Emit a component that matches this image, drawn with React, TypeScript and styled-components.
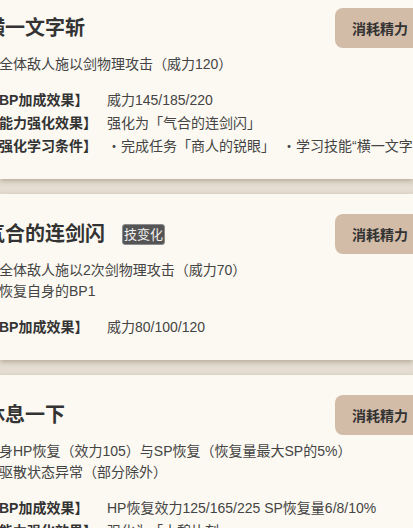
import { createGlobalStyle, styled } from "styled-components";

type Effect = { label: string; value: string };

type Skill = {
  name: string;
  badge?: string;
  desc: string[];
  effects: Effect[];
};

const skills: Skill[] = [
  {
    name: "横一文字斩",
    desc: ["对全体敌人施以剑物理攻击（威力120）"],
    effects: [
      { label: "【BP加成效果】", value: "威力145/185/220" },
      { label: "【能力强化效果】", value: "强化为「气合的连剑闪」" },
      {
        label: "【强化学习条件】",
        value: "・完成任务「商人的锐眼」　・学习技能“横一文字斩”",
      },
    ],
  },
  {
    name: "气合的连剑闪",
    badge: "技变化",
    desc: ["对全体敌人施以2次剑物理攻击（威力70）", "并恢复自身的BP1"],
    effects: [{ label: "【BP加成效果】", value: "威力80/100/120" }],
  },
  {
    name: "休息一下",
    desc: [
      "自身HP恢复（效力105）与SP恢复（恢复量最大SP的5%）",
      "并驱散状态异常（部分除外）",
    ],
    effects: [
      { label: "【BP加成效果】", value: "HP恢复效力125/165/225 SP恢复量6/8/10%" },
      { label: "【能力强化效果】", value: "强化为「小憩片刻」" },
    ],
  },
];

function SkillCard({ skill }: { skill: Skill }) {
  return (
    <Card>
      <Inner>
        <Header>
          <TitleRow>
            <Title>{skill.name}</Title>
            {skill.badge && <Badge>{skill.badge}</Badge>}
          </TitleRow>
          <CostButton>消耗精力</CostButton>
        </Header>
        <Desc>
          {skill.desc.map((line) => (
            <div key={line}>{line}</div>
          ))}
        </Desc>
        <Effects>
          {skill.effects.map((e) => (
            <EffectRow key={e.label}>
              <EffectLabel>{e.label}</EffectLabel>
              <EffectValue>{e.value}</EffectValue>
            </EffectRow>
          ))}
        </Effects>
      </Inner>
    </Card>
  );
}

export default function App() {
  return (
    <>
      <GlobalStyle />
      <Page>
        <List>
          {skills.map((s) => (
            <SkillCard key={s.name} skill={s} />
          ))}
        </List>
      </Page>
    </>
  );
}

const GlobalStyle = createGlobalStyle`
  html, body {
    margin: 0;
    padding: 0;
    background: #e5ddd1;
    overflow: hidden;
  }
  body {
    font-family: "Liberation Sans", "Noto Sans CJK SC", sans-serif;
  }
`;

const Page = styled.div`
  width: 100%;
  height: 100vh;
  overflow: hidden;
`;

const List = styled.div`
  display: flex;
  flex-direction: column;
  gap: 15px;
  margin-top: -12px;
`;

const Card = styled.section`
  background: #fcf9f2;
  box-shadow: 0 2px 5px rgba(70, 50, 25, 0.3);
  padding: 20px 0 21px;
`;

const Inner = styled.div`
  margin: 0 -12px 0 -15px;
`;

const Header = styled.div`
  display: flex;
  align-items: center;
  justify-content: space-between;
  height: 40px;
`;

const TitleRow = styled.div`
  display: flex;
  align-items: center;
  gap: 17px;
`;

const Title = styled.h2`
  margin: 0;
  font-size: 20px;
  font-weight: 700;
  color: #333;
  line-height: 28px;
`;

const Badge = styled.span`
  display: inline-block;
  height: 21px;
  box-sizing: border-box;
  padding: 0 1px;
  border: 1px solid #8c8c8c;
  border-radius: 3px;
  background: #555;
  color: #f2f2f2;
  font-size: 13px;
  line-height: 19px;
`;

const CostButton = styled.button`
  width: 90px;
  height: 40px;
  border: none;
  border-radius: 8px;
  background: #d2bba7;
  color: #333;
  font-family: inherit;
  font-size: 14px;
  font-weight: 700;
  padding: 0;
`;

const Desc = styled.div`
  margin-top: 6px;
  font-size: 14px;
  line-height: 21px;
  color: #444;
  white-space: nowrap;
`;

const Effects = styled.div`
  margin-top: 14px;
`;

const EffectRow = styled.div`
  display: grid;
  grid-template-columns: 122px 1fr;
  font-size: 14px;
  line-height: 23px;
  white-space: nowrap;
`;

const EffectLabel = styled.span`
  font-weight: 700;
  color: #333;
`;

const EffectValue = styled.span`
  color: #444;
`;
